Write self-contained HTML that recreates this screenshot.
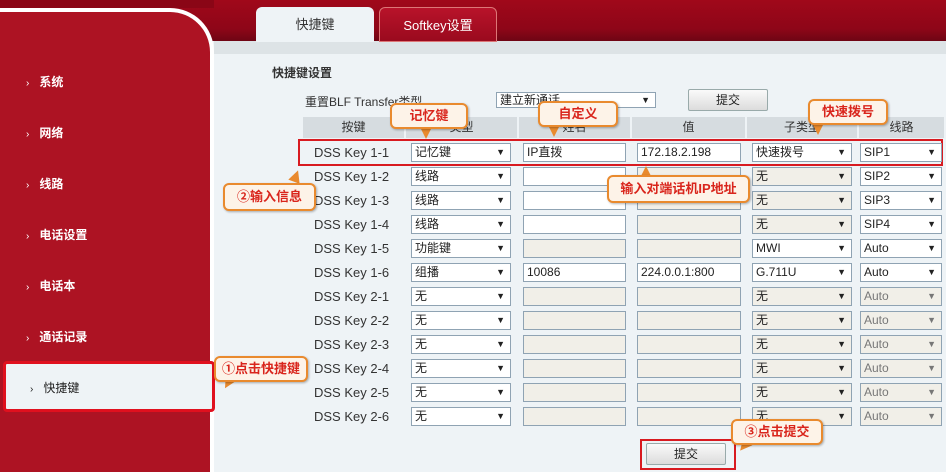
<!DOCTYPE html>
<html><head><meta charset="utf-8"><style>
*{margin:0;padding:0;box-sizing:border-box}
body{width:946px;height:472px;overflow:hidden;position:relative;background:#eef3f6;font-family:"Liberation Sans","Noto Sans CJK SC",sans-serif;font-size:12px;color:#222}
.abs{position:absolute}
#top{left:0;top:0;width:946px;height:41px;background:linear-gradient(#a0081a,#8e0618 70%,#6e0514)}
#strip{left:214px;top:41px;width:732px;height:13px;background:#dde3e6}
#side{left:0;top:8px;width:214px;height:464px;background:#ad1323;border-top:4px solid #fff;border-right:4px solid #fff;border-top-right-radius:44px}
.nav{position:absolute;left:26px;color:#fff;font-size:12px;font-weight:bold}
.nav b{font-weight:normal;margin-right:10px;font-size:10px}
.tab{position:absolute;top:7px;height:35px;width:118px;border-radius:6px 6px 0 0;text-align:center;line-height:36px;font-size:13px}
.c{position:absolute;height:19px;border:1px solid #8fa3b3;font-size:12px;line-height:17px;padding-left:3px;font-family:"Liberation Sans","Noto Sans CJK SC",sans-serif}
.c i{position:absolute;right:5px;top:0;font-style:normal;font-size:9px}
.w{background:#fff}.g{background:#f1efe8}
.lbl{position:absolute;left:314px;font-size:13px;color:#333}
.call{position:absolute;border:2px solid #e98a2e;border-radius:6px;background:#fdf3e8;color:#d9251c;font-weight:bold;font-size:13px;text-align:center;box-shadow:1px 1px 2px rgba(0,0,0,.3)}
.tail{position:absolute;width:0;height:0;border-left:6px solid transparent;border-right:6px solid transparent;border-top:12px solid #e98a2e}
.btn{position:absolute;border:1px solid #9aa;border-radius:2px;background:linear-gradient(#fafafa,#dcdcdc);text-align:center;font-size:12px}
.hd{position:absolute;top:117px;height:21px;background:#d6dce0;text-align:center;line-height:21px;font-size:12px;color:#333}
</style></head><body>
<div id="top" class="abs"></div>
<div id="strip" class="abs"></div>
<div id="side" class="abs"></div>
<div class="abs" style="left:0;top:0;width:214px;height:8px;background:#8a0616"></div>
<div class="tab" style="left:256px;background:#eef3f6;color:#333">快捷键</div>
<div class="tab" style="left:379px;background:linear-gradient(#b8132a,#9a0a1e);color:#fff;border:1px solid #d77">Softkey设置</div>

<div class="nav" style="top:73px"><b>›</b>系统</div>
<div class="nav" style="top:124px"><b>›</b>网络</div>
<div class="nav" style="top:175px"><b>›</b>线路</div>
<div class="nav" style="top:226px"><b>›</b>电话设置</div>
<div class="nav" style="top:277px"><b>›</b>电话本</div>
<div class="nav" style="top:328px"><b>›</b>通话记录</div>
<div class="abs" style="left:3px;top:361px;width:212px;height:51px;border:3px solid #e0101e;background:#eef3f6;border-radius:4px"></div>
<div class="nav" style="top:379px;color:#222;left:30px;font-weight:normal"><b>›</b>快捷键</div>

<div class="abs" style="left:272px;top:64px;font-size:12px;font-weight:bold;color:#333">快捷键设置</div>
<div class="abs" style="left:305px;top:93px;font-size:12px;color:#333">重置BLF Transfer类型</div>
<div class="c w" style="left:496px;top:92px;width:160px;height:16px;line-height:14px">建立新通话<i>▼</i></div>
<div class="btn" style="left:688px;top:89px;width:80px;height:22px;line-height:20px">提交</div>

<div class="hd" style="left:303px;width:101px">按键</div>
<div class="hd" style="left:406px;width:111px">类型</div>
<div class="hd" style="left:519px;width:111px">姓名</div>
<div class="hd" style="left:632px;width:113px">值</div>
<div class="hd" style="left:747px;width:110px">子类型</div>
<div class="hd" style="left:859px;width:85px">线路</div>

<div class="abs" style="left:298px;top:139px;width:645px;height:27px;border:2px solid #d81a20"></div>

<div class="lbl" style="top:145px">DSS Key 1-1</div>
<div class="c w" style="left:411px;top:143px;width:100px">记忆键<i>▼</i></div>
<div class="c w" style="left:523px;top:143px;width:103px">IP直拨</div>
<div class="c w" style="left:637px;top:143px;width:104px">172.18.2.198</div>
<div class="c w" style="left:752px;top:143px;width:100px">快速拨号<i>▼</i></div>
<div class="c w" style="left:860px;top:143px;width:82px">SIP1<i>▼</i></div>

<div class="lbl" style="top:169px">DSS Key 1-2</div>
<div class="c w" style="left:411px;top:167px;width:100px">线路<i>▼</i></div>
<div class="c w" style="left:523px;top:167px;width:103px"></div>
<div class="c g" style="left:637px;top:167px;width:104px"></div>
<div class="c g" style="left:752px;top:167px;width:100px">无<i>▼</i></div>
<div class="c w" style="left:860px;top:167px;width:82px">SIP2<i>▼</i></div>

<div class="lbl" style="top:193px">DSS Key 1-3</div>
<div class="c w" style="left:411px;top:191px;width:100px">线路<i>▼</i></div>
<div class="c w" style="left:523px;top:191px;width:103px"></div>
<div class="c g" style="left:637px;top:191px;width:104px"></div>
<div class="c g" style="left:752px;top:191px;width:100px">无<i>▼</i></div>
<div class="c w" style="left:860px;top:191px;width:82px">SIP3<i>▼</i></div>

<div class="lbl" style="top:217px">DSS Key 1-4</div>
<div class="c w" style="left:411px;top:215px;width:100px">线路<i>▼</i></div>
<div class="c w" style="left:523px;top:215px;width:103px"></div>
<div class="c g" style="left:637px;top:215px;width:104px"></div>
<div class="c g" style="left:752px;top:215px;width:100px">无<i>▼</i></div>
<div class="c w" style="left:860px;top:215px;width:82px">SIP4<i>▼</i></div>

<div class="lbl" style="top:241px">DSS Key 1-5</div>
<div class="c w" style="left:411px;top:239px;width:100px">功能键<i>▼</i></div>
<div class="c g" style="left:523px;top:239px;width:103px"></div>
<div class="c g" style="left:637px;top:239px;width:104px"></div>
<div class="c w" style="left:752px;top:239px;width:100px">MWI<i>▼</i></div>
<div class="c w" style="left:860px;top:239px;width:82px">Auto<i>▼</i></div>

<div class="lbl" style="top:265px">DSS Key 1-6</div>
<div class="c w" style="left:411px;top:263px;width:100px">组播<i>▼</i></div>
<div class="c w" style="left:523px;top:263px;width:103px">10086</div>
<div class="c w" style="left:637px;top:263px;width:104px">224.0.0.1:800</div>
<div class="c w" style="left:752px;top:263px;width:100px">G.711U<i>▼</i></div>
<div class="c w" style="left:860px;top:263px;width:82px">Auto<i>▼</i></div>

<div class="lbl" style="top:289px">DSS Key 2-1</div>
<div class="c w" style="left:411px;top:287px;width:100px">无<i>▼</i></div>
<div class="c g" style="left:523px;top:287px;width:103px"></div>
<div class="c g" style="left:637px;top:287px;width:104px"></div>
<div class="c g" style="left:752px;top:287px;width:100px">无<i>▼</i></div>
<div class="c g" style="left:860px;top:287px;width:82px;color:#777">Auto<i>▼</i></div>

<div class="lbl" style="top:313px">DSS Key 2-2</div>
<div class="c w" style="left:411px;top:311px;width:100px">无<i>▼</i></div>
<div class="c g" style="left:523px;top:311px;width:103px"></div>
<div class="c g" style="left:637px;top:311px;width:104px"></div>
<div class="c g" style="left:752px;top:311px;width:100px">无<i>▼</i></div>
<div class="c g" style="left:860px;top:311px;width:82px;color:#777">Auto<i>▼</i></div>

<div class="lbl" style="top:337px">DSS Key 2-3</div>
<div class="c w" style="left:411px;top:335px;width:100px">无<i>▼</i></div>
<div class="c g" style="left:523px;top:335px;width:103px"></div>
<div class="c g" style="left:637px;top:335px;width:104px"></div>
<div class="c g" style="left:752px;top:335px;width:100px">无<i>▼</i></div>
<div class="c g" style="left:860px;top:335px;width:82px;color:#777">Auto<i>▼</i></div>

<div class="lbl" style="top:361px">DSS Key 2-4</div>
<div class="c w" style="left:411px;top:359px;width:100px">无<i>▼</i></div>
<div class="c g" style="left:523px;top:359px;width:103px"></div>
<div class="c g" style="left:637px;top:359px;width:104px"></div>
<div class="c g" style="left:752px;top:359px;width:100px">无<i>▼</i></div>
<div class="c g" style="left:860px;top:359px;width:82px;color:#777">Auto<i>▼</i></div>

<div class="lbl" style="top:385px">DSS Key 2-5</div>
<div class="c w" style="left:411px;top:383px;width:100px">无<i>▼</i></div>
<div class="c g" style="left:523px;top:383px;width:103px"></div>
<div class="c g" style="left:637px;top:383px;width:104px"></div>
<div class="c g" style="left:752px;top:383px;width:100px">无<i>▼</i></div>
<div class="c g" style="left:860px;top:383px;width:82px;color:#777">Auto<i>▼</i></div>

<div class="lbl" style="top:409px">DSS Key 2-6</div>
<div class="c w" style="left:411px;top:407px;width:100px">无<i>▼</i></div>
<div class="c g" style="left:523px;top:407px;width:103px"></div>
<div class="c g" style="left:637px;top:407px;width:104px"></div>
<div class="c g" style="left:752px;top:407px;width:100px">无<i>▼</i></div>
<div class="c g" style="left:860px;top:407px;width:82px;color:#777">Auto<i>▼</i></div>

<div class="abs" style="left:640px;top:439px;width:96px;height:31px;border:2px solid #d81a20"></div>
<div class="btn" style="left:646px;top:443px;width:80px;height:22px;line-height:20px">提交</div>

<!-- callouts -->
<div class="tail" style="left:420px;top:127px"></div>
<div class="call" style="left:390px;top:103px;width:78px;height:26px;line-height:22px">记忆键</div>
<div class="tail" style="left:548px;top:125px"></div>
<div class="call" style="left:538px;top:101px;width:80px;height:26px;line-height:22px">自定义</div>
<div class="tail" style="left:812px;top:123px"></div>
<div class="call" style="left:808px;top:99px;width:80px;height:26px;line-height:22px">快速拨号</div>
<div class="tail" style="left:290px;top:170px;transform:rotate(200deg)"></div>
<div class="call" style="left:223px;top:183px;width:93px;height:28px;line-height:24px">②输入信息</div>
<div class="tail" style="left:640px;top:166px;transform:rotate(180deg)"></div>
<div class="call" style="left:607px;top:175px;width:143px;height:28px;line-height:24px">输入对端话机IP地址</div>
<div class="tail" style="left:222px;top:377px;transform:rotate(30deg)"></div>
<div class="call" style="left:214px;top:356px;width:94px;height:26px;line-height:22px">①点击快捷键</div>
<div class="tail" style="left:738px;top:440px;transform:rotate(40deg)"></div>
<div class="call" style="left:731px;top:419px;width:92px;height:26px;line-height:22px">③点击提交</div>
</body></html>
